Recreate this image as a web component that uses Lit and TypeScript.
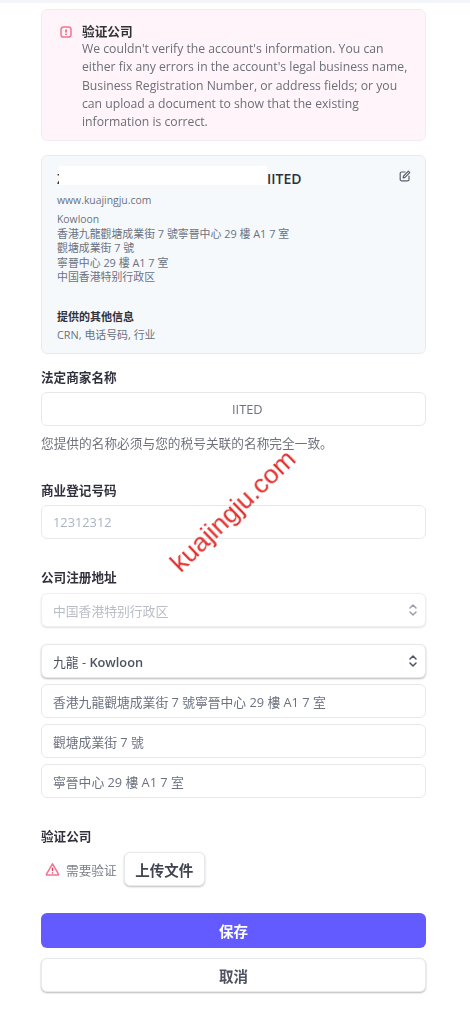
import { LitElement, html, css } from "lit";
import { customElement } from "lit/decorators.js";

const chevrons = (color: string) => html`<svg class="chev" viewBox="0 0 10 14" fill="none" stroke=${color} stroke-width="1.5" stroke-linecap="round" stroke-linejoin="round"><path d="M2 5l3-3 3 3M2 9l3 3 3-3"/></svg>`;

@customElement("app-root")
export class AppRoot extends LitElement {
  static styles = css`
    :host {
      display: block;
      position: relative;
      width: 470px;
      height: 1024px;
      overflow: hidden;
      background: #fff;
      font-family: "Open Sans", "Noto Sans CJK SC", "Noto Sans CJK TC", sans-serif;
      color: #6b7280;
    }
    .strip { height: 3px; background: #f4f5f8; }
    .page { padding: 6px 44px 0 41px; display: flex; flex-direction: column; filter: blur(0.35px); }
    .alert {
      box-sizing: border-box; height: 132px; background: #fff4f9; border: 1px solid #f8e9f0; border-radius: 6px;
      padding: 12px 16px 0 18px; display: flex; gap: 10px;
    }
    .alert svg { width: 12px; height: 12px; margin-top: 4px; flex: none; }
    .alert-title { font-size: 12.7px; font-weight: 700; line-height: 18px; color: #2f3237; }
    .alert-body { font-size: 12.2px; line-height: 18.25px; color: #6b6f78; }
    .card {
      box-sizing: border-box; position: relative; height: 199px; margin-top: 14px; background: #f6f9fc; border: 1px solid #e6ebf1;
      border-radius: 6px; padding: 14px 15px 0 15px;
    }
    .name { font-size: 14px; font-weight: 600; line-height: 18px; color: #30313d; display: flex; }
    .redact { position: absolute; left: 17px; top: 10px; width: 208px; height: 19px; background: #fff; }
    .name-gap { width: 202px; }
    .edit { position: absolute; right: 14px; top: 14px; width: 12px; height: 12px; }
    .small { font-size: 10.9px; color: #6b7280; }
    .site { font-size: 10.4px; line-height: 15px; margin-top: 5px; }
    .addr { line-height: 14.6px; margin-top: 4px; }
    .kow { font-size: 10.4px; }
    .sub-title { font-size: 11px; font-weight: 700; line-height: 15px; color: #30313d; margin-top: 24px; }
    .sub-body { line-height: 15px; margin-top: 3px; }
    .label { font-size: 12.6px; font-weight: 700; line-height: 18px; color: #30313d; }
    .field {
      box-sizing: border-box; height: 34px; background: #fff; border: 1px solid #e6e8ec; border-radius: 6px;
      padding: 0 11px; display: flex; align-items: center; font-size: 12.8px; color: #6b7280;
    }
    .l1 { margin-top: 15px; }
    .field.f-after-label { margin-top: 5px; }
    .offset { padding-left: 190px; }
    .help { font-size: 12.7px; line-height: 18px; color: #6f737c; margin-top: 8px; }
    .l2 { margin-top: 30px; }
    .placeholder { color: #aab3c4; }
    .l3 { margin-top: 30px; }
    .select { justify-content: space-between; padding-right: 7px; box-shadow: 0 1px 2px rgba(0,0,0,.12); }
    .select.dim { color: #b9bdc6; margin-top: 6px; border-color: #eceef1; }
    .select.on { color: #4f5260; margin-top: 17px; box-shadow: 0 1px 2px rgba(0,0,0,.28); height: 34px; }
    .select b { font-weight: 600; }
    .chev { width: 10px; height: 14px; }
    .stack { margin-top: 6px; }
    .l4 { margin-top: 30px; }
    .verify { display: flex; align-items: center; margin-top: 6px; height: 34px; }
    .verify svg { width: 15px; height: 15px; margin-left: 4px; }
    .verify span { font-size: 12.7px; color: #7c8089; margin-left: 6px; margin-right: 7px; }
    .upload {
      box-sizing: border-box; width: 81px; height: 34px; border-radius: 6px; background: #fff; border: 1px solid #e8e9ed;
      box-shadow: 0 1px 2px rgba(0,0,0,.25); display: flex; align-items: center; justify-content: center;
      font-size: 14.5px; font-weight: 700; color: #414552;
    }
    .btn {
      box-sizing: border-box; height: 35px; border-radius: 6px; display: flex; align-items: center; justify-content: center;
      font-size: 14.5px; font-weight: 700;
    }
    .save { margin-top: 27px; background: #635bff; color: #fff; }
    .cancel { margin-top: 10px; height: 34px; background: #fff; color: #4f5260; border: 1px solid #e8e9ed; box-shadow: 0 1px 2px rgba(0,0,0,.28); }
    .watermark {
      position: absolute; left: 233px; top: 511px; transform: translate(-50%, -50%) rotate(-44deg);
      font-family: "Liberation Sans", Arial, sans-serif; font-size: 26.5px; color: #e0302c; white-space: nowrap;
    }
  `;

  render() {
    return html`
      <div class="strip"></div>
      <div class="page">
        <div class="alert">
          <svg viewBox="0 0 12 12" fill="none"><rect x="1" y="1" width="10" height="10" rx="2.6" stroke="#f7728e" stroke-width="1.5"/><path d="M6 3.4v3" stroke="#d9405f" stroke-width="1.3"/><circle cx="6" cy="8.2" r=".8" fill="#d9405f"/></svg>
          <div>
            <div class="alert-title">验证公司</div>
            <div class="alert-body">We couldn't verify the account's information. You can either fix any errors in the account's legal business name, Business Registration Number, or address fields; or you can upload a document to show that the existing information is correct.</div>
          </div>
        </div>

        <div class="card">
          <div class="name"><span>Z</span><span class="name-gap"></span><span>IITED</span></div>
          <div class="redact"></div>
          <svg class="edit" viewBox="0 0 12 12" fill="none" stroke="#5b5f6b" stroke-width="1.2" stroke-linecap="round" stroke-linejoin="round"><path d="M6 2H2.6A1.4 1.4 0 0 0 1.2 3.4v6A1.4 1.4 0 0 0 2.6 10.8h6A1.4 1.4 0 0 0 10 9.4V6.2"/><path d="M9.4 1.2l1.4 1.4L6 7.4l-1.9.5.5-1.9z"/></svg>
          <div class="small site">www.kuajingju.com</div>
          <div class="small addr"><span class="kow">Kowloon</span><br>香港九龍觀塘成業街 7 號寧晉中心 29 樓 A1 7 室<br>觀塘成業街 7 號<br>寧晉中心 29 樓 A1 7 室<br>中国香港特别行政区</div>
          <div class="sub-title">提供的其他信息</div>
          <div class="small sub-body">CRN, 电话号码, 行业</div>
        </div>

        <div class="label l1">法定商家名称</div>
        <div class="field f-after-label offset">IITED</div>
        <div class="help">您提供的名称必须与您的税号关联的名称完全一致。</div>

        <div class="label l2">商业登记号码</div>
        <div class="field f-after-label placeholder">12312312</div>

        <div class="label l3">公司注册地址</div>
        <div class="field select dim">中国香港特别行政区 ${chevrons("#9aa0ab")}</div>
        <div class="field select on"><span>九龍 - <b>Kowloon</b></span> ${chevrons("#4f5260")}</div>
        <div class="field stack">香港九龍觀塘成業街 7 號寧晉中心 29 樓 A1 7 室</div>
        <div class="field stack">觀塘成業街 7 號</div>
        <div class="field stack">寧晉中心 29 樓 A1 7 室</div>

        <div class="label l4">验证公司</div>
        <div class="verify">
          <svg viewBox="0 0 15 15" fill="none"><path d="M7.5 1.8l6 10.4a.6.6 0 0 1-.5.9H2a.6.6 0 0 1-.5-.9z" stroke="#f7728e" stroke-width="1.5" stroke-linejoin="round"/><path d="M7.5 5.6v3.4" stroke="#d9405f" stroke-width="1.4"/><circle cx="7.5" cy="11" r=".8" fill="#d9405f"/></svg>
          <span>需要验证</span>
          <div class="upload">上传文件</div>
        </div>

        <div class="btn save">保存</div>
        <div class="btn cancel">取消</div>
      </div>
      <div class="watermark">kuajingju.com</div>
    `;
  }
}
